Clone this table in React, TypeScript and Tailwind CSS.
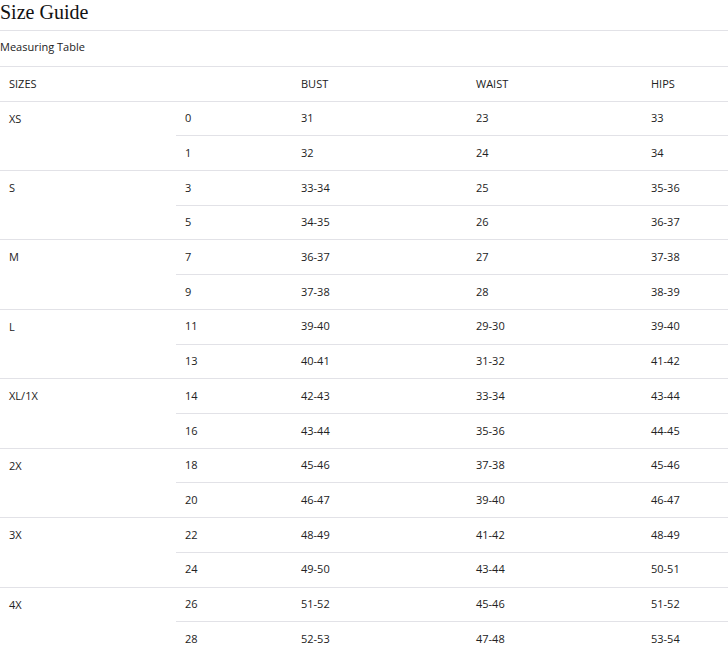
import React from 'react';

type SizeGroup = {
  size: string;
  rows: [string, string, string, string][];
};

const groups: SizeGroup[] = [
  { size: 'XS', rows: [['0', '31', '23', '33'], ['1', '32', '24', '34']] },
  { size: 'S', rows: [['3', '33-34', '25', '35-36'], ['5', '34-35', '26', '36-37']] },
  { size: 'M', rows: [['7', '36-37', '27', '37-38'], ['9', '37-38', '28', '38-39']] },
  { size: 'L', rows: [['11', '39-40', '29-30', '39-40'], ['13', '40-41', '31-32', '41-42']] },
  { size: 'XL/1X', rows: [['14', '42-43', '33-34', '43-44'], ['16', '43-44', '35-36', '44-45']] },
  { size: '2X', rows: [['18', '45-46', '37-38', '45-46'], ['20', '46-47', '39-40', '46-47']] },
  { size: '3X', rows: [['22', '48-49', '41-42', '48-49'], ['24', '49-50', '43-44', '50-51']] },
  { size: '4X', rows: [['26', '51-52', '45-46', '51-52'], ['28', '52-53', '47-48', '53-54']] },
];

const cell = 'px-[9px] align-middle font-normal';

export default function App() {
  return (
    <div className="w-[728px] bg-white text-[#222] font-['Open_Sans','Liberation_Sans',sans-serif]">
      <h1 className="h-[31px] border-b border-[#e2e2e7] font-['Liberation_Serif',serif] text-[20px] leading-[22px] pt-[1px] text-[#111]">
        Size Guide
      </h1>
      <div className="h-[36px] flex items-center pb-[2px] border-b border-[#e2e2e7] text-[11px]">
        Measuring Table
      </div>
      <table className="w-full border-collapse text-[11px] table-fixed">
        <colgroup>
          <col className="w-[176px]" />
          <col className="w-[116px]" />
          <col className="w-[175px]" />
          <col className="w-[175px]" />
          <col />
        </colgroup>
        <thead>
          <tr className="h-[34px] border-b border-[#e2e2e7] text-left">
            <th className={cell}>SIZES</th>
            <th className={cell}></th>
            <th className={cell}>BUST</th>
            <th className={cell}>WAIST</th>
            <th className={cell}>HIPS</th>
          </tr>
        </thead>
        <tbody>
          {groups.map((g, gi) =>
            g.rows.map((r, ri) => (
              <tr
                key={`${gi}-${ri}`}
                className={`h-[34.72px] ${ri === 0 || gi < groups.length - 1 ? 'border-b border-[#e2e2e7]' : ''}`}
              >
                {ri === 0 && (
                  <td rowSpan={2} className="px-[9px] align-top pt-[9px]">
                    {g.size}
                  </td>
                )}
                {r.map((v, i) => (
                  <td key={i} className={cell}>
                    {v}
                  </td>
                ))}
              </tr>
            ))
          )}
        </tbody>
      </table>
    </div>
  );
}
